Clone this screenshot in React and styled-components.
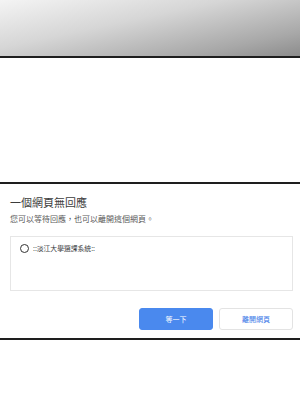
import React, { useState } from "react";
import styled, { createGlobalStyle } from "styled-components";

const GlobalStyle = createGlobalStyle`
  html, body {
    margin: 0;
    padding: 0;
    background: #ffffff;
  }
  body {
    font-family: "Noto Sans CJK TC", "Noto Sans", sans-serif;
  }
`;

const Page = styled.div`
  width: 300px;
  height: 400px;
  display: flex;
  flex-direction: column;
  background: #ffffff;
  overflow: hidden;
`;

const Shade = styled.div`
  height: 56px;
  flex: none;
  background: linear-gradient(168deg, #f4f4f4 0%, #d6d6d6 40%, #a8a8a8 80%, #8c8c8c 100%);
  border-bottom: 2px solid #1e1e1e;
`;

const Blank = styled.div`
  height: 124px;
  flex: none;
`;

const Dialog = styled.div`
  flex: none;
  box-sizing: border-box;
  height: 158px;
  border-top: 2px solid #1e1e1e;
  border-bottom: 2px solid #1e1e1e;
  padding: 10px 7px 0 10px;
  display: flex;
  flex-direction: column;
`;

const Title = styled.h1`
  margin: 0;
  font-size: 11px;
  line-height: 16px;
  font-weight: 400;
  color: #3c3c3c;
`;

const Subtitle = styled.p`
  margin: 3px 0 0;
  font-size: 8px;
  line-height: 12px;
  color: #5a5a5a;
`;

const PageList = styled.div`
  margin-top: 11px;
  height: 55px;
  border: 1px solid #e6e6e6;
  padding: 6px 0 0 9px;
  box-sizing: border-box;
`;

const Option = styled.label`
  display: flex;
  align-items: center;
  gap: 4px;
  font-size: 6.8px;
  line-height: 10px;
  color: #3c4043;
  cursor: pointer;
`;

const Radio = styled.span`
  width: 7px;
  height: 7px;
  border-radius: 50%;
  border: 1.5px solid #333333;
  background: ${(p) => (p.$checked ? "#333333" : "transparent")};
  box-shadow: ${(p) => (p.$checked ? "inset 0 0 0 1.5px #fff" : "none")};
`;

const Actions = styled.div`
  margin-top: 17px;
  display: flex;
  justify-content: flex-end;
  gap: 6px;
`;

const Button = styled.button`
  width: 74px;
  height: 22px;
  border-radius: 3px;
  font-family: inherit;
  font-size: 7px;
  padding: 0;
  cursor: pointer;
  border: 1px solid ${(p) => (p.$primary ? "#4a89ee" : "#e3e3e3")};
  background: ${(p) => (p.$primary ? "#4a89ee" : "#ffffff")};
  color: ${(p) => (p.$primary ? "#ffffff" : "#3b78e7")};
`;

export default function App() {
  const [picked, setPicked] = useState(false);

  return (
    <Page>
      <GlobalStyle />
      <Shade />
      <Blank />
      <Dialog>
        <Title>一個網頁無回應</Title>
        <Subtitle>您可以等待回應，也可以離開這個網頁。</Subtitle>
        <PageList>
          <Option onClick={() => setPicked(!picked)}>
            <Radio $checked={picked} />
            ::淡江大學選課系統::
          </Option>
        </PageList>
        <Actions>
          <Button $primary>等一下</Button>
          <Button>離開網頁</Button>
        </Actions>
      </Dialog>
    </Page>
  );
}
